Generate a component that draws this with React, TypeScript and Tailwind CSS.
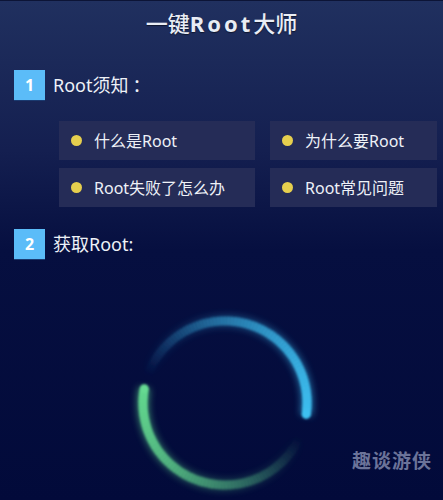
import React from "react";

const font = { fontFamily: '"Noto Sans", "Noto Sans CJK SC", sans-serif' };

const items = ["什么是Root", "为什么要Root", "Root失败了怎么办", "Root常见问题"];

function arcSegments(cx: number, cy: number, r: number, from: number, to: number, n: number) {
  const segs: { d: string; o: number }[] = [];
  for (let i = 0; i < n; i++) {
    const a1 = ((from + ((to - from) * i) / n) * Math.PI) / 180;
    const a2 = ((from + ((to - from) * (i + 1.3)) / n) * Math.PI) / 180;
    const x1 = cx + r * Math.cos(a1);
    const y1 = cy + r * Math.sin(a1);
    const x2 = cx + r * Math.cos(a2);
    const y2 = cy + r * Math.sin(a2);
    segs.push({ d: `M${x1.toFixed(2)} ${y1.toFixed(2)} A${r} ${r} 0 0 1 ${x2.toFixed(2)} ${y2.toFixed(2)}`, o: Math.pow((i + 1) / n, 1.1) });
  }
  return segs;
}

function Spinner() {
  const cx = 100;
  const cy = 100;
  const r = 82;
  const blue = arcSegments(cx, cy, r, -160, 8, 70);
  const green = arcSegments(cx, cy, r, 25, 190, 70);
  const head = (deg: number) => ({
    x: cx + r * Math.cos((deg * Math.PI) / 180),
    y: cy + r * Math.sin((deg * Math.PI) / 180),
  });
  const bh = head(8);
  const gh = head(190);
  return (
    <svg width="200" height="200" viewBox="0 0 200 200">
      <defs>
        <filter id="soft" x="-20%" y="-20%" width="140%" height="140%">
          <feGaussianBlur stdDeviation="1.2" />
        </filter>
        <filter id="glow" x="-20%" y="-20%" width="140%" height="140%">
          <feGaussianBlur stdDeviation="3.5" />
        </filter>
      </defs>
      <g filter="url(#glow)" opacity="0.6">
        {blue.map((s, i) => (
          <path key={"bg" + i} d={s.d} stroke="#3ab8ec" strokeWidth="12" fill="none" opacity={s.o} />
        ))}
        {green.map((s, i) => (
          <path key={"gg" + i} d={s.d} stroke="#5cd38c" strokeWidth="12" fill="none" opacity={s.o} />
        ))}
      </g>
      <g filter="url(#soft)">
        {blue.map((s, i) => (
          <path key={"b" + i} d={s.d} stroke="#3dbdee" strokeWidth="9" fill="none" opacity={s.o} />
        ))}
        {green.map((s, i) => (
          <path key={"g" + i} d={s.d} stroke="#62d68e" strokeWidth="9" fill="none" opacity={s.o} />
        ))}
        <circle cx={bh.x} cy={bh.y} r="4.5" fill="#3ec0f0" />
        <circle cx={gh.x} cy={gh.y} r="4.5" fill="#66da92" />
      </g>
    </svg>
  );
}

function Step({ n, label, colon }: { n: string; label: string; colon: string }) {
  return (
    <div className="flex items-center gap-[8px] pl-[14px]">
      <div className="grid h-[30px] w-[31px] place-items-center bg-[#5bbcf8] text-[16px] font-bold text-white shadow-[0_1px_0_#1a3a70]">
        {n}
      </div>
      <span className="text-[18px] text-[#eef1f7]">
        {label}
        <span className={colon === "：" ? "ml-[4px]" : ""}>{colon}</span>
      </span>
    </div>
  );
}

export default function App() {
  return (
    <div
      style={font}
      className="relative h-[500px] w-[443px] overflow-hidden border-t border-[#0c1436] bg-[linear-gradient(to_bottom,#20305f_0%,#141f50_30%,#060f40_50%,#020a3a_100%)]"
    >
      <div className="flex h-[44px] items-center justify-center">
        <h1 className="text-[22px] font-medium text-[#e9edf5] [text-shadow:0_1px_1px_rgba(0,0,0,0.5)]">
          一键<span className="font-bold tracking-[3px]">Root</span>大师
        </h1>
      </div>

      <div className="mt-[25px]">
        <Step n="1" label="Root须知" colon="：" />
      </div>

      <div className="mt-[21px] grid grid-cols-[196px_167px] gap-x-[15px] gap-y-[8px] pl-[59px]">
        {items.map((t) => (
          <div key={t} className="flex h-[39px] items-center gap-[12px] bg-[#252c57] pl-[12px]">
            <span className="h-[11px] w-[11px] rounded-full bg-[#e6cf4e]" />
            <span className="text-[16px] text-[#eef1f7]">{t}</span>
          </div>
        ))}
      </div>

      <div className="mt-[22px]">
        <Step n="2" label="获取Root" colon=":" />
      </div>

      <div className="ml-[125px] mt-[44px]">
        <Spinner />
      </div>

      <div className="absolute bottom-[26px] right-[11px] text-[19px] font-bold tracking-[1px] text-[#6b7399] [font-family:'Noto_Sans_CJK_SC',sans-serif]">
        趣谈游侠
      </div>
    </div>
  );
}
